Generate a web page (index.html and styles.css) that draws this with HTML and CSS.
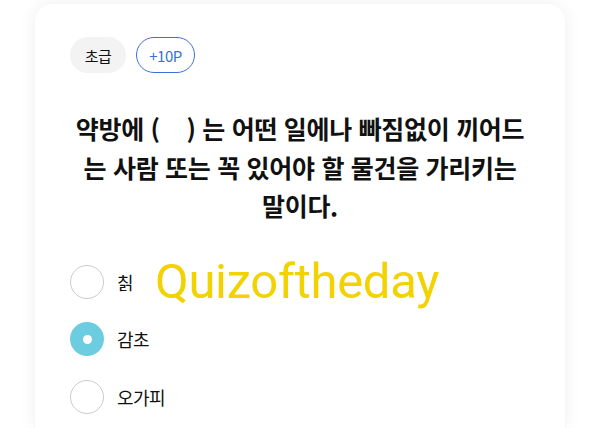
FILE: index.html
```html
<!DOCTYPE html>
<html lang="ko">
<head>
<meta charset="utf-8">
<link rel="stylesheet" href="styles.css">
</head>
<body>
<div class="card">
  <div class="tags">
    <span class="tag level">초급</span>
    <span class="tag point">+10P</span>
  </div>
  <p class="question">약방에 (&nbsp;&nbsp;&nbsp;&nbsp;) 는 어떤 일에나 빠짐없이 끼어드는 사람 또는 꼭 있어야 할 물건을 가리키는 말이다.</p>
  <ul class="options">
    <li class="option"><span class="radio"></span><span class="label">칡</span></li>
    <li class="option selected"><span class="radio"></span><span class="label">감초</span></li>
    <li class="option"><span class="radio"></span><span class="label">오가피</span></li>
  </ul>
  <div class="watermark">Quizoftheday</div>
</div>
</body>
</html>
```
FILE: styles.css
```css
html, body {
  margin: 0;
  padding: 0;
  background: #ffffff;
  font-family: "Noto Sans CJK KR", "Noto Sans", sans-serif;
  color: #111;
  overflow: hidden;
}
body {
  padding: 4px 35px 0 35px;
  height: 428px;
  box-sizing: border-box;
}
.card {
  position: relative;
  box-sizing: border-box;
  background: #fff;
  border-radius: 18px 18px 0 0;
  box-shadow: 0 0 18px rgba(0, 0, 0, 0.07);
  padding: 33px 35px 0 35px;
  height: 424px;
  overflow: hidden;
}
.tags {
  display: flex;
  gap: 10px;
}
.tag {
  display: flex;
  align-items: center;
  justify-content: center;
  height: 36px;
  box-sizing: border-box;
  border-radius: 18px;
  font-size: 15px;
  letter-spacing: -0.5px;
}
.level {
  width: 56px;
  background: #f3f3f3;
  color: #111;
}
.point {
  width: 59px;
  border: 1.5px solid #3c70d6;
  color: #3c70d6;
}
.question {
  margin: 36px 0 0 0;
  text-align: center;
  font-size: 25px;
  font-weight: 700;
  line-height: 38.5px;
  letter-spacing: -0.3px;
}
.options {
  list-style: none;
  margin: 40px 0 0 0;
  padding: 0;
  display: flex;
  flex-direction: column;
  gap: 23.5px;
}
.option {
  display: flex;
  align-items: center;
  gap: 13px;
  height: 34px;
}
.radio {
  width: 34px;
  height: 34px;
  box-sizing: border-box;
  border-radius: 50%;
  border: 1.5px solid #cccccc;
  display: flex;
  align-items: center;
  justify-content: center;
}
.selected .radio {
  border: none;
  background: #6ccde0;
}
.selected .radio::after {
  content: "";
  width: 9px;
  height: 9px;
  border-radius: 50%;
  background: #fff;
}
.label {
  font-size: 18px;
  letter-spacing: -0.5px;
}
.watermark {
  position: absolute;
  left: 120px;
  top: 253px;
  font-family: Roboto, "Noto Sans", sans-serif;
  font-size: 49px;
  letter-spacing: -0.3px;
  color: #f2d200;
  line-height: 1;
}
```
